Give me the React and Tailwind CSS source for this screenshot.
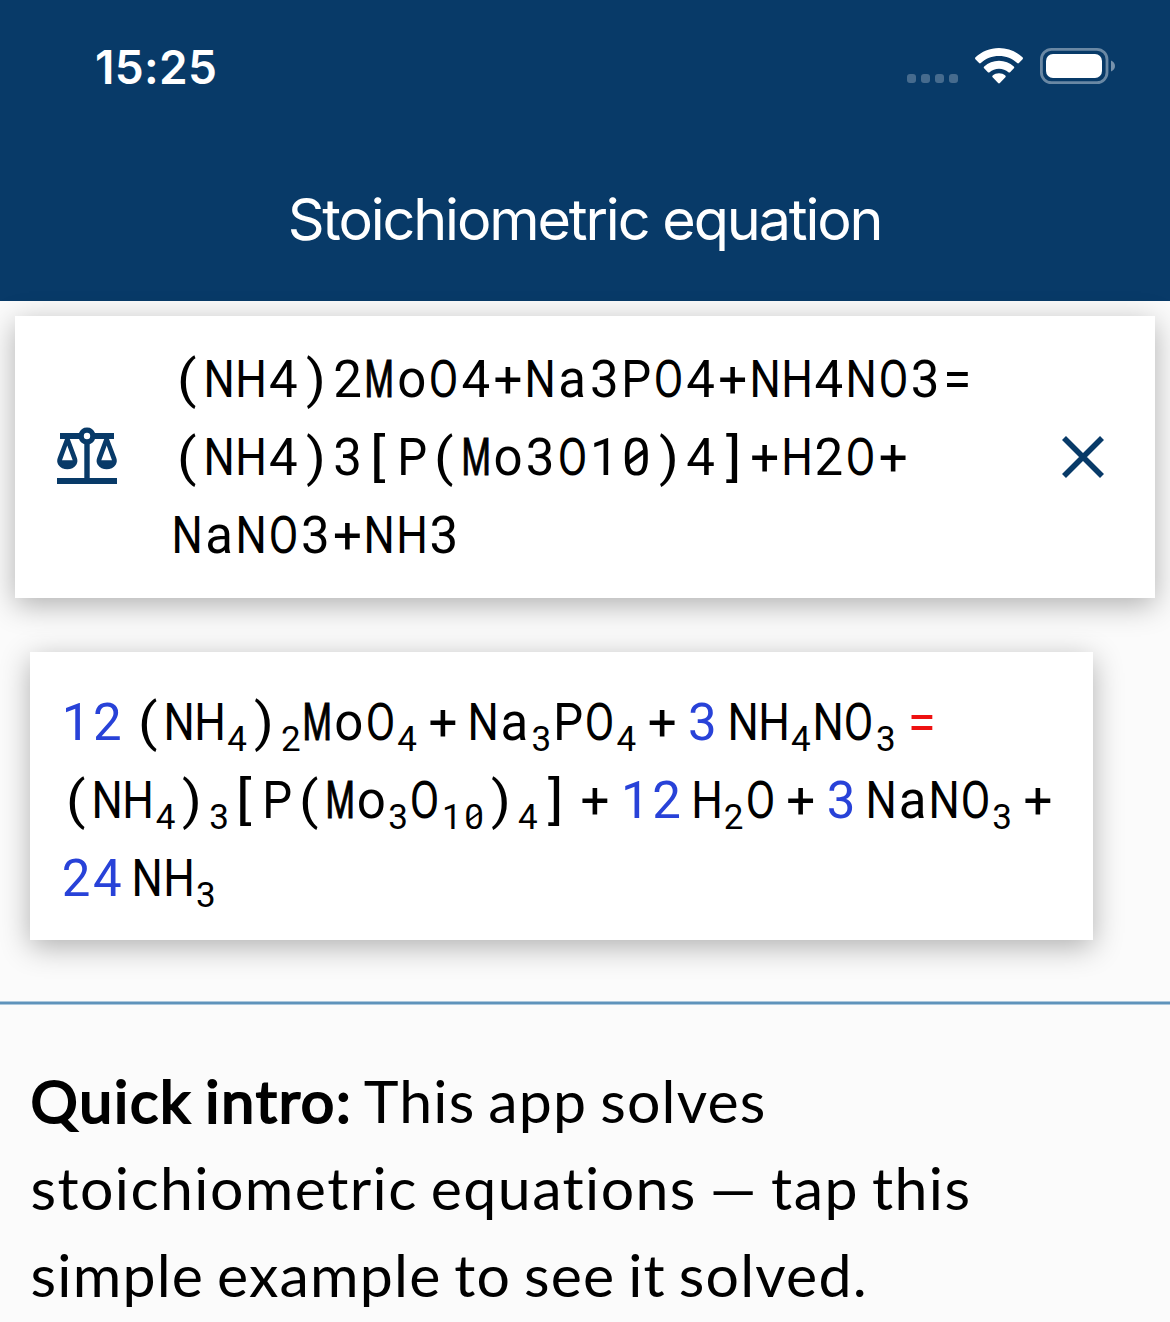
const HORIZONTAL_SCALE = {
  N: 'scale-x-[0.86]',
  H: 'scale-x-[0.87]',
  M: 'scale-x-[0.66] [-webkit-text-stroke:1px_currentColor]',
  O: 'scale-x-[0.84]',
  P: 'scale-x-[0.93]',
  '(': 'scale-x-[1.12]',
  ')': 'scale-x-[1.12]',
  '[': 'scale-x-[1.15] -translate-x-[2px]',
  ']': 'scale-x-[1.15] translate-x-[1px]',
};

// Formula input, already wrapped at the operators
const inputLines = [
  '(NH4)2MoO4+Na3PO4+NH4NO3=',
  '(NH4)3[P(Mo3O10)4]+H2O+',
  'NaNO3+NH3',
];

// Digits in `formula` are subscripts
const solvedLines = [
  [
    { coefficient: '12' },
    { formula: '(NH4)2MoO4' },
    { operator: '+' },
    { formula: 'Na3PO4' },
    { operator: '+' },
    { coefficient: '3' },
    { formula: 'NH4NO3' },
    { equals: '=' },
  ],
  [
    { formula: '(NH4)3[P(Mo3O10)4]' },
    { operator: '+' },
    { coefficient: '12' },
    { formula: 'H2O' },
    { operator: '+' },
    { coefficient: '3' },
    { formula: 'NaNO3' },
    { operator: '+' },
  ],
  [{ coefficient: '24' }, { formula: 'NH3' }],
];

function Glyph({ char, width }) {
  return (
    <span className={`relative inline-flex justify-center leading-none ${width}`}>
      <span className={HORIZONTAL_SCALE[char] || ''}>{char}</span>
      {char === '0' && (
        <span className="absolute left-1/2 top-[0.487em] h-[0.07em] w-[0.4em] -translate-x-1/2 -translate-y-1/2 -rotate-[36deg] bg-current" />
      )}
    </span>
  );
}

function Mono({ text, width = 'w-[31.3px]' }) {
  return text.split('').map((char, index) => <Glyph key={index} char={char} width={width} />);
}

function Formula({ text }) {
  return text.split(/(\d+)/).filter(Boolean).map((part, index) =>
    /\d/.test(part) ? (
      <sub key={index} className="bottom-[-11px] text-[35px]">
        <Mono text={part} width="w-[22.4px]" />
      </sub>
    ) : (
      <Mono key={index} text={part} />
    )
  );
}

function Token({ token }) {
  if (token.coefficient) {
    return <span className="text-[#2842d8]"><Mono text={token.coefficient} /></span>;
  }
  if (token.equals) {
    return <span className="text-[#ee1111]"><Mono text={token.equals} /></span>;
  }
  if (token.operator) {
    return <span><Mono text={token.operator} /></span>;
  }
  return <span><Formula text={token.formula} /></span>;
}

function WifiIcon() {
  return (
    <svg viewBox="0 0 48 36" className="h-9 w-12 fill-white">
      <path d="M24 0C14.900 0 6.700 3.500 .5 9.300c-.6.600-.6 1.300-.1 1.900l3.700 3.800c.5.500 1.200.5 1.700 0C10.600 10.600 17 8 24 8s13.400 2.600 18.200 7c.5.500 1.200.5 1.700 0l3.700-3.800c.5-.6.5-1.300-.1-1.900C41.300 3.500 33.100 0 24 0Z" />
      <path d="M24 12.800c-5.600 0-10.800 2.100-14.800 5.700-.6.500-.6 1.300-.1 1.800l3.800 3.900c.5.500 1.200.5 1.700.1 2.500-2.200 5.800-3.500 9.400-3.500s6.900 1.300 9.400 3.500c.5.400 1.200.4 1.700-.1l3.800-3.900c.5-.5.5-1.300-.1-1.800-4-3.600-9.200-5.700-14.800-5.700Z" />
      <path d="M24 25.300c-2.400 0-4.600.8-6.300 2.200-.6.500-.6 1.200-.1 1.700l5.500 5.800c.5.500 1.300.5 1.800 0l5.500-5.800c.5-.5.5-1.200-.1-1.700-1.700-1.400-3.900-2.200-6.300-2.200Z" />
    </svg>
  );
}

function BatteryIcon() {
  return (
    <svg viewBox="0 0 75 36" className="h-9 w-[75px]">
      <rect x="1.400" y="1.400" width="65.600" height="33.200" rx="10" fill="none" stroke="#fff" strokeOpacity=".4" strokeWidth="2.800" />
      <rect x="6" y="6" width="56" height="24" rx="7" fill="#fff" />
      <path d="M71 12.500c2.500 1 4 3 4 5.500s-1.500 4.500-4 5.500Z" fill="#fff" fillOpacity=".45" />
    </svg>
  );
}

function ScalesIcon() {
  return (
    <svg viewBox="0 0 62 58" className="mb-[2px] h-[58px] w-[62px] fill-[#083a68]">
      <path fillRule="evenodd" d="M31 0.400a8.600 8.600 0 0 1 8 5.600h19v6H39a8.600 8.600 0 0 1-5.300 5.200V51H61v6H1v-6h27.300V17.200A8.600 8.600 0 0 1 23 12H4V6h19A8.600 8.600 0 0 1 31 .4Zm0 5.400a3.200 3.200 0 1 0 0 6.400 3.200 3.200 0 0 0 0-6.400Z" />
      <path fillRule="evenodd" d="M9 12h4.800l7.100 19c.8 2.200.7 4.600-.6 6.700-2 3.200-5.400 4.500-9 4.500s-7-1.300-9-4.500C1 35.600.9 33.200 1.700 31Zm2.300 6.500L6 33.300h10.700Z" />
      <path fillRule="evenodd" d="M48.200 12H53l7.300 19c.8 2.200.7 4.600-.6 6.700-2 3.200-5.400 4.500-9 4.500s-7-1.300-9-4.500c-1.300-2.100-1.400-4.500-.6-6.700Zm2.500 6.500-5.400 14.800H56Z" />
    </svg>
  );
}

function CloseIcon() {
  return (
    <svg viewBox="0 0 42 42" className="size-[42px]" fill="none" stroke="#083a68" strokeWidth="5.600">
      <path d="M2 2l38 38M40 2L2 40" />
    </svg>
  );
}

export default function App() {
  return (
    <div className="h-[1322px] overflow-hidden bg-[#fbfbfb] text-black">
      {/* Header */}
      <header className="h-[301px] bg-[#083a68] text-white font-['Inter',sans-serif]">
        <div className="flex h-[134px] items-center justify-between pl-[95px] pr-[55px]">
          <span className="text-[46px] font-semibold leading-none tracking-[0.35px]">15:25</span>
          <div className="flex items-end pb-0.5">
            <div className="mb-px mr-[17px] flex gap-[5px]">
              {[0, 1, 2, 3].map((dot) => (
                <span key={dot} className="size-[9px] rounded-[3px] bg-white/25" />
              ))}
            </div>
            <WifiIcon />
            <div className="ml-[17px]">
              <BatteryIcon />
            </div>
          </div>
        </div>
        <h1 className="pt-[50px] pr-px text-center text-[57.5px] leading-[70px] tracking-[-2.15px]">
          Stoichiometric equation
        </h1>
      </header>

      {/* Input */}
      <section className="mx-[15px] mt-[15px] flex h-[282px] items-center bg-white pl-[41px] pr-[51px] shadow-[0_7px_28px_rgba(0,0,0,0.3)]">
        <ScalesIcon />
        <div className="ml-[53px] flex-1 whitespace-nowrap pt-[2px] font-['Roboto',sans-serif] text-[51px] leading-[78px]">
          {inputLines.map((line) => (
            <div key={line} className="h-[78px]">
              <Mono text={line} width="w-[32.1px]" />
            </div>
          ))}
        </div>
        <CloseIcon />
      </section>

      {/* Balanced equation */}
      <section className="ml-[30px] mt-[54px] h-[288px] w-[1063px] whitespace-nowrap bg-white pl-[30.4px] pt-[32px] font-['Roboto',sans-serif] text-[51px] leading-[78px] shadow-[0_7px_28px_rgba(0,0,0,0.3)]">
        {solvedLines.map((line, index) => (
          <div key={index} className="flex h-[78px] items-baseline gap-[9px]">
            {line.map((token, i) => (
              <Token key={i} token={token} />
            ))}
          </div>
        ))}
      </section>

      <div className="mt-[61px] h-1 border-y border-[#abc7dc] bg-[#5f93bb]" />

      {/* Intro */}
      <section className="pl-[30.6px] pt-[52px] font-['Lato',sans-serif] text-[59px] leading-[87px] tracking-[1.2px] [word-spacing:-3.5px]">
        <p className="whitespace-nowrap">
          <strong className="font-normal tracking-[1.85px] [-webkit-text-stroke:2.2px_currentColor]">Quick intro:</strong> This app solves
          <br />
          <span className="tracking-[1.42px]">stoichiometric equations — tap this</span>
          <br />
          simple example to see it solved.
        </p>
      </section>
    </div>
  );
}
